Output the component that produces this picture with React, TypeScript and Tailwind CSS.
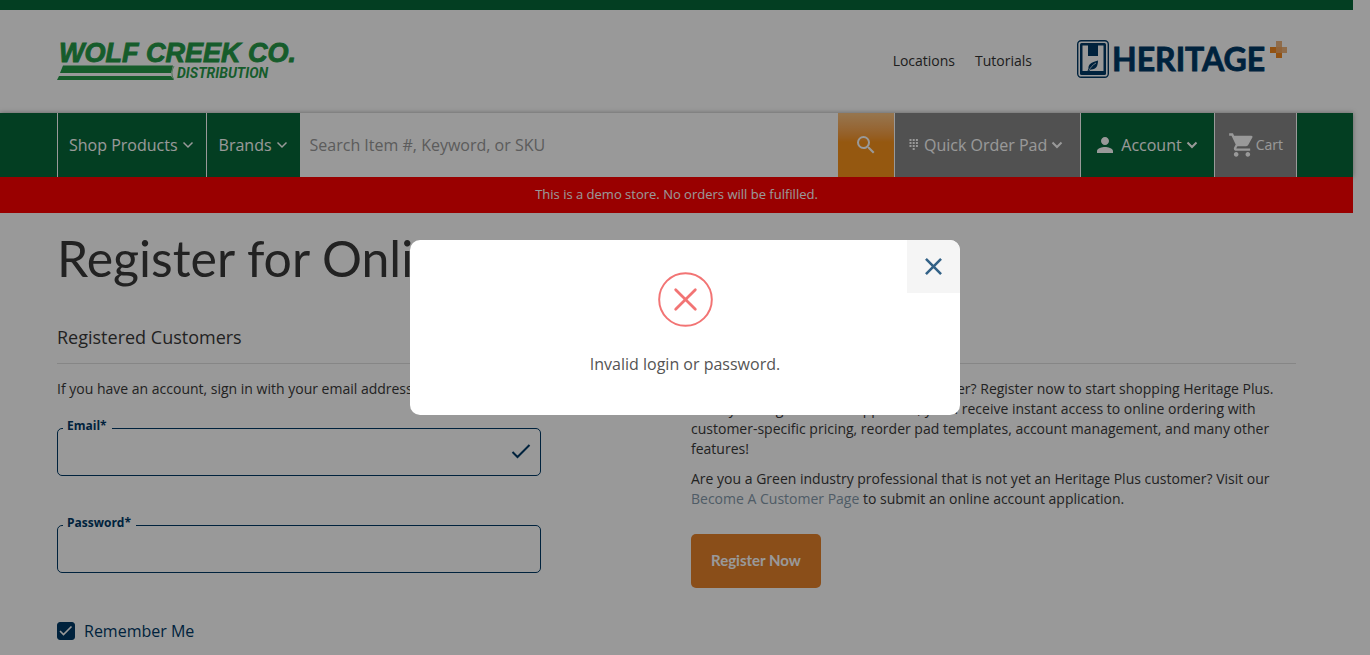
import React from "react";
import { MdSearch, MdPerson, MdShoppingCart } from "react-icons/md";

function Chevron({ bold = false }: { bold?: boolean }) {
  return (
    <svg width="12" height="8" viewBox="0 0 12 8" fill="none" stroke="currentColor" strokeWidth={bold ? 2 : 1.5} aria-hidden="true">
      <path d="M1.5 1.5 6 6l4.5-4.5" />
    </svg>
  );
}

function KeypadIcon() {
  const rows = [0, 3, 6];
  return (
    <svg width="10" height="12" viewBox="0 0 10 12" fill="currentColor" aria-hidden="true">
      {rows.map((y) => (
        <g key={y}>
          <rect x="0.5" y={y} width="2" height="2" />
          <rect x="3.7" y={y} width="2" height="2" />
          <rect x="6.9" y={y} width="2" height="2" />
        </g>
      ))}
      <rect x="3.7" y="9" width="2" height="2" />
    </svg>
  );
}

function WolfCreekLogo() {
  return (
    <svg width="256" height="58" viewBox="0 -8 256 58" fill="#259a48" role="img" aria-label="Wolf Creek Co. Distribution">
      <text x="2" y="22" fontFamily="Liberation Sans, sans-serif" fontSize="27" fontWeight="700" fontStyle="italic" stroke="#259a48" strokeWidth="0.9">
        WOLF CREEK CO.
      </text>
      <path d="M6 25.500H116L114 33H3Z" />
      <path d="M2 36H114L117 40H0Z" />
      <path d="M117 26Q113 33 116.500 39" fill="none" stroke="#259a48" strokeWidth="0.6" />
      <text x="120" y="38" fontFamily="Roboto, sans-serif" fontSize="14" fontWeight="700" fontStyle="italic">
        DISTRIBUTION
      </text>
    </svg>
  );
}

function HeritageLogo() {
  return (
    <svg width="212" height="40" viewBox="0 0 212 40" role="img" aria-label="Heritage Plus">
      <rect x="0.7" y="1.700" width="30.600" height="36.600" rx="3.500" fill="none" stroke="#003a67" strokeWidth="1.400" />
      <rect x="3" y="4" width="26" height="32" rx="1.500" fill="#003a67" />
      <path d="M5.500 6.500H11V17H21V6.500H26.500V32H5.500Z" fill="#fff" />
      <path d="M21 21.500C14 23 11 26 11.500 29.500L10.500 32H12.500L13.500 30.500C19 31 21 27 21 21.500Z" fill="#003a67" />
      <path d="M19 24C15.500 26 13.500 28.500 12 31.500" fill="none" stroke="#fff" strokeWidth="0.7" />
      <text x="35" y="32" fontFamily="Lato, sans-serif" fontSize="32" fontWeight="700" fill="#003a67" stroke="#003a67" strokeWidth="0.8">
        HERITAGE
      </text>
      <g>
        <rect x="193" y="8" width="6" height="6" fill="#f3891f" />
        <rect x="199" y="2" width="6" height="6" fill="#efb47c" />
        <rect x="199" y="8" width="6" height="6" fill="#f0a65f" />
        <rect x="205" y="8" width="5" height="6" fill="#efb47c" />
        <rect x="199" y="14" width="6" height="5" fill="#f3891f" />
      </g>
    </svg>
  );
}

function Field({ id, label, type, valid = false }: { id: string; label: string; type: string; valid?: boolean }) {
  return (
    <div className="relative w-4/5">
      <label htmlFor={id} className="absolute -top-[11px] left-1.5 bg-white pr-[5px] pl-1 text-xs leading-[18px] font-bold text-[#003a67]">
        {label}
      </label>
      <input id={id} type={type} className="block h-12 w-full rounded-[5px] border border-[#003a67] bg-white px-3 text-base outline-none" />
      {valid && (
        <svg className="absolute top-4 right-2.5" width="20" height="16" viewBox="0 0 20 16" fill="none" stroke="#003a67" strokeWidth="2" aria-hidden="true">
          <path d="M1.500 8 6.500 13 18.500 1" />
        </svg>
      )}
    </div>
  );
}

function Header() {
  return (
    <header>
      <div className="h-2.5 bg-[#066839]" />
      <div className="flex h-[103px] items-center justify-between bg-white px-[57px] pb-0.5">
        <a href="#home">
          <WolfCreekLogo />
        </a>
        <div className="flex items-center gap-5 pr-[7px] text-sm text-[#333]">
          <a href="#locations">Locations</a>
          <a href="#tutorials">Tutorials</a>
          <a href="#heritage" className="ml-[25px] -mt-1">
            <HeritageLogo />
          </a>
        </div>
      </div>
      <nav className="flex h-16 bg-[#066839] pr-14 pl-[57px] text-base text-white shadow-[0_0_5px_rgba(0,0,0,0.35)]">
        <button className="flex items-center gap-1 border-x border-white pr-3 pl-[11px]">
          Shop Products <Chevron />
        </button>
        <button className="flex items-center gap-1 px-3">
          Brands <Chevron />
        </button>
        <input
          aria-label="Search"
          placeholder="Search Item #, Keyword, or SKU"
          className="min-w-0 flex-1 bg-white px-2.5 text-[#333] outline-none placeholder:text-[#999]"
        />
        <button aria-label="Submit search" className="flex w-14 items-center justify-center bg-linear-to-b from-[#fac585] to-[#f8931c] to-45%">
          <MdSearch size={24} />
        </button>
        <button className="flex items-center gap-1 border-x border-white bg-[#878787] pr-[17px] pl-3.5">
          <KeypadIcon />
          <span className="pl-px">Quick Order Pad</span> <Chevron bold />
        </button>
        <button className="flex items-center gap-1 pr-4 pl-3">
          <MdPerson size={24} />
          Account <Chevron bold />
        </button>
        <a href="#cart" className="flex items-center border-x border-white bg-[#878787] px-[13px] text-sm">
          <MdShoppingCart size={28} />
          Cart
        </a>
      </nav>
      <p className="relative bg-[#f00] pt-[7px] pb-[9px] text-center text-[13px] leading-5 text-white">
        This is a demo store. No orders will be fulfilled.
      </p>
    </header>
  );
}

function ErrorDialog() {
  return (
    <div className="fixed inset-0 flex items-center justify-center bg-black/40">
      <div role="dialog" aria-modal="true" aria-labelledby="error-message" className="relative flex h-[175px] w-[550px] flex-col items-center overflow-hidden rounded-[10px] bg-white pt-8">
        <svg width="55" height="55" viewBox="0 0 56 56" fill="none" stroke="#f27474" aria-hidden="true">
          <circle cx="28" cy="28" r="26.800" strokeWidth="2" />
          <path d="M18 18 38 38M38 18 18 38" strokeWidth="2.800" strokeLinecap="round" />
        </svg>
        <p id="error-message" className="mt-[25px] text-base leading-6 text-[#545454]">
          Invalid login or password.
        </p>
        <button aria-label="Close" className="absolute top-0 right-0 flex size-[53px] items-center justify-center bg-[#f5f5f5]">
          <svg width="17" height="17" viewBox="0 0 18 18" fill="none" stroke="#336287" strokeWidth="2.700" aria-hidden="true">
            <path d="M1 1 17 17M17 1 1 17" />
          </svg>
        </button>
      </div>
    </div>
  );
}

export default function App() {
  return (
    <div className="bg-white pr-[17px] font-['Open_Sans',sans-serif] text-sm leading-5 text-[#393939]">
      <Header />
      <main className="px-[57px] pt-[17px]">
        <h1 className="font-['Lato',sans-serif] text-[50px] leading-[56px]">Register for Online Account</h1>
        <div className="mt-[33px] grid grid-cols-2 gap-[29px]">
          <section>
            <h2 className="border-b border-[#e0e0e0] pt-1 pb-3 text-lg leading-7">Registered Customers</h2>
            <p className="mt-[15px]">If you have an account, sign in with your email address.</p>
            <form className="mt-[29px]">
              <Field id="email" label="Email*" type="text" valid />
              <div className="mt-[49px]">
                <Field id="password" label="Password*" type="password" />
              </div>
              <label className="mt-[46px] flex items-center gap-[9px] text-base leading-6 text-[#003a67]">
                <span className="relative flex size-[18px]">
                  <input type="checkbox" defaultChecked className="peer size-[18px] appearance-none rounded-[3px] border border-[#003a67] checked:bg-[#003a67]" />
                  <svg className="pointer-events-none absolute inset-0 hidden peer-checked:block" width="18" height="18" viewBox="0 0 18 18" fill="none" stroke="#fff" strokeWidth="1.600" aria-hidden="true">
                    <path d="M3 9 6.500 12.500 14.500 4.500" />
                  </svg>
                </span>
                Remember Me
              </label>
            </form>
          </section>
          <section>
            <h2 className="border-b border-[#e0e0e0] pt-1 pb-3 text-lg leading-7">New Customers</h2>
            <p className="mt-[15px]">
              Are you an existing Heritage Plus customer? Register now to start shopping Heritage Plus. Once your registration is
              approved, you’ll receive instant access to online ordering with customer-specific pricing, reorder pad templates,
              account management, and many other features!
            </p>
            <p className="mt-2.5">
              Are you a Green industry professional that is not yet an Heritage Plus customer? Visit our{" "}
              <a href="#become" className="text-[#8499ab]">
                Become A Customer Page
              </a>{" "}
              to submit an online account application.
            </p>
            <button className="mt-[25px] h-[54px] rounded-[5px] bg-[#e6822b] px-5 pb-0.5 font-['Lato',sans-serif] text-[15px] font-bold text-white">
              Register Now
            </button>
          </section>
        </div>
      </main>
      <ErrorDialog />
    </div>
  );
}
